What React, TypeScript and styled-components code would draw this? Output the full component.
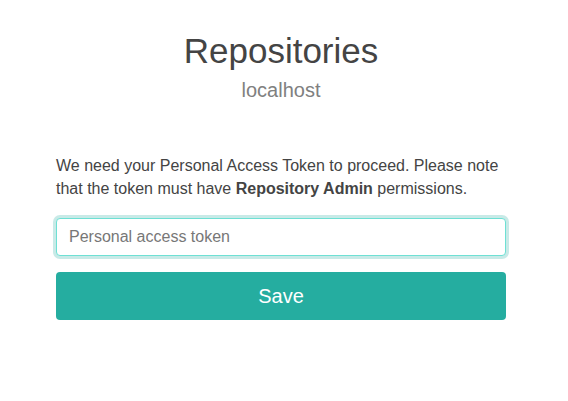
import React from "react";
import styled, { createGlobalStyle } from "styled-components";

const Global = createGlobalStyle`
  html, body { margin: 0; padding: 0; background: #fff; }
  body { font-family: "Liberation Sans", Arial, sans-serif; color: #444; }
  * { box-sizing: border-box; }
`;

const Page = styled.div`
  width: 568px;
  height: 401px;
  display: flex;
  flex-direction: column;
  padding: 30px 62px 0 56px;
`;

const Header = styled.header`
  display: flex;
  flex-direction: column;
  align-items: center;
  margin-bottom: 52px;
`;

const Title = styled.h1`
  margin: 0;
  font-size: 35px;
  font-weight: 400;
  line-height: 42px;
  color: #444;
`;

const Subtitle = styled.div`
  margin-top: 6px;
  font-size: 20px;
  line-height: 24px;
  color: #808080;
`;

const Note = styled.p`
  margin: 0 0 18px;
  font-size: 16px;
  line-height: 23px;
  color: #444;
`;

const Form = styled.form`
  display: flex;
  flex-direction: column;
  gap: 16px;
`;

const Input = styled.input`
  width: 100%;
  height: 38px;
  padding: 0 12px;
  font-family: inherit;
  font-size: 16px;
  color: #444;
  border: 1px solid #6ee0d4;
  border-radius: 4px;
  box-shadow: 0 0 0 3px rgba(36, 173, 160, 0.25);
  outline: none;
  &::placeholder { color: #777; }
`;

const Button = styled.button`
  width: 100%;
  height: 48px;
  border: none;
  border-radius: 4px;
  background: #25ada0;
  color: #fff;
  font-family: inherit;
  font-size: 20px;
  cursor: pointer;
`;

export default function App() {
  return (
    <>
      <Global />
      <Page>
        <Header>
          <Title>Repositories</Title>
          <Subtitle>localhost</Subtitle>
        </Header>
        <Note>
          We need your Personal Access Token to proceed. Please note that the
          token must have <strong>Repository Admin</strong> permissions.
        </Note>
        <Form onSubmit={(e) => e.preventDefault()}>
          <Input placeholder="Personal access token" autoFocus />
          <Button type="submit">Save</Button>
        </Form>
      </Page>
    </>
  );
}
